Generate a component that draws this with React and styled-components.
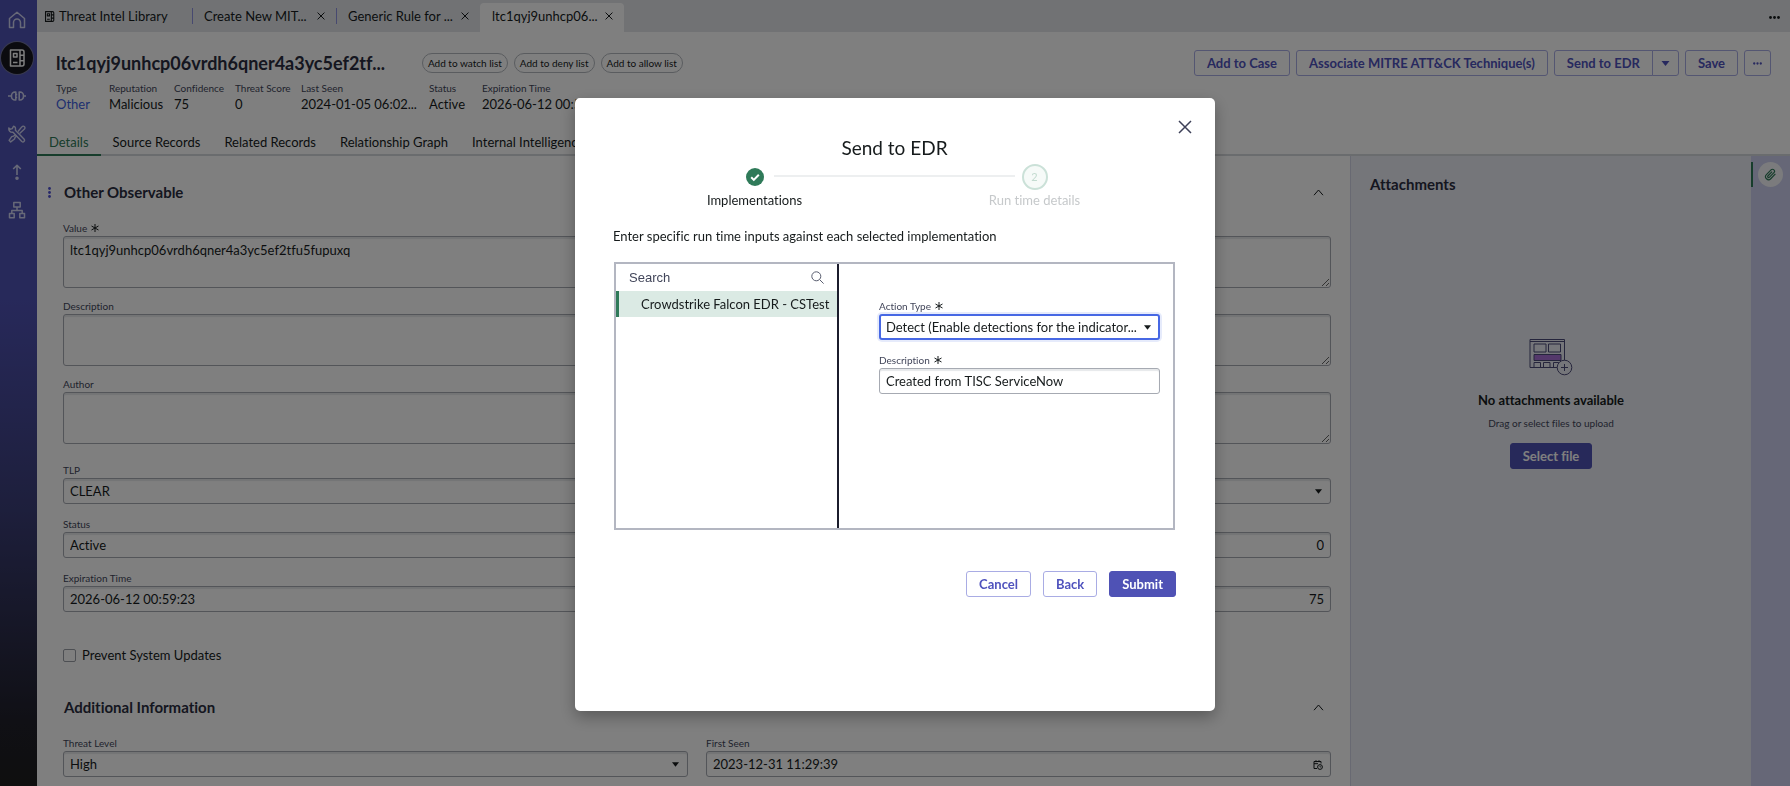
import React from "react";
import styled, { createGlobalStyle, css } from "styled-components";

const GlobalStyle = createGlobalStyle`
  * {
    box-sizing: border-box;
  }

  body {
    margin: 0;
    font-family: Lato, "Liberation Sans", sans-serif;
    font-size: 13px;
    line-height: 16px;
    font-variant-ligatures: no-common-ligatures;
    color: #161b1c;
    background: #fff;
    overflow: hidden;
  }

  h1, h2, h3, p, dl, dd {
    margin: 0;
  }

  button, input, select, textarea {
    font: inherit;
    font-variant-ligatures: inherit;
    color: inherit;
    margin: 0;
  }

  button {
    padding: 0;
    border: 0;
    background: none;
    cursor: pointer;
  }

  svg {
    display: block;
    flex: none;
  }
`;

const Page = styled.div`
  display: flex;
  height: 100vh;
`;

/* side navigation */

const Sidebar = styled.nav`
  flex: none;
  display: flex;
  flex-direction: column;
  align-items: center;
  gap: 6px;
  width: 37px;
  padding: 4px 3px 0 0;
  background: linear-gradient(180deg, #4f52b5 0%, #4f52b5 38%, #3b3e78 65%, #20202a 92%, #1e1e1e 100%);
`;

const NavButton = styled.button`
  display: flex;
  align-items: center;
  justify-content: center;
  width: 32px;
  height: 32px;
  border-radius: 50%;
  color: #cfd2f0;

  ${(p) =>
    p.$active &&
    css`
      background: #17171f;
      color: #fff;
      box-shadow: 0 0 0 1px #70739c;
    `}
`;

const Workspace = styled.div`
  flex: 1;
  min-width: 0;
  display: flex;
  flex-direction: column;
`;

/* open record tabs */

const TabBar = styled.div`
  flex: none;
  display: flex;
  align-items: flex-end;
  height: 32px;
  background: #e2e5e9;
`;

const RecordTab = styled.div`
  display: flex;
  align-items: center;
  gap: 4px;
  width: ${(p) => p.$width || 144}px;
  height: 29px;
  padding: 0 11px 3px ${(p) => (p.$home ? 7 : 12)}px;
  border-radius: 4px 4px 0 0;
  background: ${(p) => (p.$active ? "#fff" : "transparent")};
  white-space: nowrap;
`;

const TabName = styled.span`
  flex: 1;
`;

const TabDivider = styled.span`
  align-self: center;
  width: 1px;
  height: 16px;
  margin-right: -1px;
  background: #8f92e0;
`;

const TabMenu = styled.button`
  margin: 0 10px 13px auto;
`;

/* record header */

const Header = styled.header`
  flex: none;
  height: 124px;
  display: flex;
  flex-direction: column;
  border-bottom: 2px solid #d5d8dc;
`;

const HeaderTop = styled.div`
  display: flex;
  align-items: center;
  justify-content: space-between;
  padding: 18px 19px 0;
`;

const TitleGroup = styled.div`
  display: flex;
  align-items: center;
  gap: 37px;
`;

const Title = styled.h1`
  font-size: 18px;
  line-height: 26px;
  font-weight: 700;
  color: #2a2d40;
`;

const Row = styled.div`
  display: flex;
  align-items: center;
  gap: 6px;
`;

const Chip = styled.button`
  height: 20px;
  padding: 0 5px;
  border: 1px solid #b4b8be;
  border-radius: 10px;
  font-size: 10px;
  line-height: 18px;
`;

const Button = styled.button`
  display: flex;
  align-items: center;
  justify-content: center;
  height: 26px;
  padding: 0 ${(p) => p.$pad || 12}px;
  border: 1px solid #a9ace4;
  border-radius: 3px;
  background: #fff;
  color: #4f52bd;
  font-weight: 700;
  white-space: nowrap;

  ${(p) =>
    p.$primary &&
    css`
      border-color: #4f52b5;
      background: #4f52b5;
      color: #fff;
    `}
`;

const SplitButton = styled.div`
  display: flex;

  ${Button}:first-child {
    border-radius: 3px 0 0 3px;
  }

  ${Button}:last-child {
    margin-left: -1px;
    border-radius: 0 3px 3px 0;
  }
`;

const Facts = styled.dl`
  display: grid;
  grid-template-columns: 53px 65px 61px 66px 128px 53px 130px;
  padding: 4px 19px 0;
  white-space: nowrap;
`;

const FactName = styled.dt`
  font-size: 10px;
  line-height: 16px;
  color: #42465a;
`;

const FactLink = styled.a`
  color: #3d5fe0;
  text-decoration: none;
`;

const SectionTabs = styled.div`
  display: flex;
  margin-top: auto;
  margin-bottom: -2px;
`;

const SectionTab = styled.button`
  padding: 0 12px 4px;
  line-height: 16px;
  white-space: nowrap;
  border-bottom: 2px solid ${(p) => (p.$active ? "#2f7a59" : "transparent")};
  color: ${(p) => (p.$active ? "#2f7a59" : "inherit")};
`;

/* record body */

const Body = styled.div`
  flex: 1;
  min-height: 0;
  display: flex;
`;

const Form = styled.main`
  flex: 1;
  min-width: 0;
  padding: 24px 19px 0 26px;
  overflow: hidden;
`;

const SectionHead = styled.div`
  display: flex;
  align-items: center;
  justify-content: space-between;
  height: 24px;
  margin-top: ${(p) => p.$top || 0}px;
  padding: 0 7px 0 1px;
`;

const SectionTitle = styled.h2`
  position: relative;
  font-size: 15px;
  line-height: 24px;
  font-weight: 700;
  color: #2a2d40;
`;

const Grip = styled.span`
  position: absolute;
  left: -16px;
  top: 7px;
  color: #4f52d5;
`;

const Field = styled.div`
  display: flex;
  flex-direction: column;
  min-width: 0;
  margin-top: ${(p) => p.$top || 0}px;
`;

const Label = styled.label`
  display: flex;
  align-items: center;
  gap: 4px;
  height: 16px;
  font-size: 10px;
  line-height: 16px;
  color: #42465a;
`;

const boxStyle = css`
  width: 100%;
  border: 1px solid #a6aab2;
  border-radius: 3px;
  background: #fff;
  box-shadow: inset 0 2px 1px #e6e8ea;
  outline: none;
`;

const TextArea = styled.textarea`
  ${boxStyle}
  display: block;
  height: 52px;
  padding: 5px 6px;
  resize: vertical;
`;

const Input = styled.input`
  ${boxStyle}
  height: 26px;
  padding: 0 6px;
  text-align: ${(p) => (p.$right ? "right" : "left")};
`;

const SelectWrap = styled.div`
  position: relative;

  svg {
    position: absolute;
    right: 9px;
    top: 11px;
    pointer-events: none;
  }
`;

const Select = styled.select`
  ${boxStyle}
  display: block;
  height: 26px;
  padding: 0 17px 0 6px;
  appearance: none;
  text-overflow: ellipsis;

  ${(p) =>
    p.$focus &&
    css`
      border: 2px solid #4768e4;
      padding-left: 5px;
      box-shadow: 0 0 0 2px #e6ebfb;
    `}
`;

const InputWrap = styled.div`
  position: relative;

  svg {
    position: absolute;
    right: 8px;
    top: 9px;
  }
`;

const Columns = styled.div`
  display: grid;
  grid-template-columns: 1fr 1fr;
  gap: 12px 18px;
  margin-top: ${(p) => p.$top}px;
`;

const CheckRow = styled.label`
  display: flex;
  align-items: center;
  gap: 6px;
  margin-top: 35px;
`;

const Checkbox = styled.input`
  appearance: none;
  width: 13px;
  height: 13px;
  border: 1px solid #9a9ea6;
  border-radius: 2px;
  background: #fff;
`;

/* attachments */

const Attachments = styled.aside`
  flex: none;
  display: flex;
  flex-direction: column;
  width: 401px;
  padding: 16px 19px;
  border-left: 1px solid #d0d3e4;
  background: #ebedf4;
`;

const Empty = styled.div`
  display: flex;
  flex-direction: column;
  align-items: center;
  margin-top: 142px;
`;

const EmptyTitle = styled.h3`
  margin-top: 16px;
  font-size: 13px;
  line-height: 16px;
  font-weight: 700;
`;

const EmptyHint = styled.p`
  margin: 8px 0 13px;
  font-size: 10px;
  line-height: 14px;
  color: #42465a;
`;

const Rail = styled.div`
  flex: none;
  display: flex;
  align-items: flex-start;
  gap: 5px;
  width: 39px;
  padding-top: 6px;
  background: #cccfee;
`;

const RailMarker = styled.span`
  width: 2px;
  height: 25px;
  background: #2f7a59;
`;

const RailButton = styled.button`
  display: flex;
  align-items: center;
  justify-content: center;
  width: 25px;
  height: 25px;
  border-radius: 50%;
  background: #f6f7fa;
  color: #2f7a59;
`;

/* modal */

const Overlay = styled.div`
  position: fixed;
  inset: 0;
  display: flex;
  align-items: flex-start;
  justify-content: center;
  padding-top: 98px;
  background: rgba(0, 0, 0, 0.5);
`;

const Dialog = styled.section`
  display: flex;
  flex-direction: column;
  width: 640px;
  padding: 22px 39px 114px 38px;
  border-radius: 5px;
  background: #fff;
  box-shadow: 0 6px 16px rgba(0, 0, 0, 0.3);
`;

const CloseButton = styled.button`
  align-self: flex-end;
  height: 14px;
  margin-right: -16px;
  color: #3d4058;
`;

const DialogTitle = styled.h2`
  font-size: 19px;
  line-height: 28px;
  font-weight: 400;
  text-align: center;
`;

const Steps = styled.ol`
  display: grid;
  grid-template-columns: 280px 280px;
  justify-content: center;
  margin: 2px 0 0;
  padding: 0;
  list-style: none;
`;

const Step = styled.li`
  position: relative;
  display: flex;
  flex-direction: column;
  align-items: center;
  color: ${(p) => (p.$upcoming ? "#c6c9cb" : "inherit")};
  line-height: 20px;

  /* line from this step to the next one */
  &:not(:last-child)::after {
    content: "";
    position: absolute;
    top: 11px;
    left: calc(50% + 19px);
    width: calc(100% - 39px);
    height: 2px;
    background: #edeff0;
  }
`;

const StepMark = styled.span`
  display: flex;
  align-items: center;
  height: 26px;
`;

const StepNumber = styled.span`
  width: 26px;
  height: 26px;
  border: 2px solid #cbe1d8;
  border-radius: 50%;
  background: #f6faf8;
  color: #c3dbd0;
  font-size: 11px;
  line-height: 22px;
  text-align: center;
`;

const Intro = styled.p`
  margin-top: 16px;
  line-height: 20px;
`;

const Split = styled.div`
  display: grid;
  grid-template-columns: 223px 1fr;
  height: 268px;
  margin: 16px 1px 0;
  border: 2px solid #b3b6c1;
`;

const ListPane = styled.div`
  border-right: 2px solid #1b1c2c;
`;

const SearchBox = styled.label`
  display: flex;
  align-items: center;
  justify-content: space-between;
  height: 27px;
  padding: 0 13px;
  color: #5a5e70;
`;

const SearchInput = styled.input`
  flex: 1;
  min-width: 0;
  padding: 0;
  border: 0;
  outline: 0;
  background: none;
  font-family: "Liberation Sans", Arial, sans-serif;

  &::placeholder {
    color: #42465a;
    opacity: 1;
  }
`;

const ListItem = styled.button`
  display: block;
  width: 100%;
  height: 26px;
  padding-left: 22px;
  border-left: 3px solid #2f7a59;
  background: #dbeae4;
  text-align: left;
  white-space: nowrap;
`;

const InputPane = styled.div`
  min-width: 0;
  padding: 34px 13px 0 40px;
`;

const Actions = styled.div`
  display: flex;
  justify-content: flex-end;
  gap: 12px;
  margin-top: 41px;
`;

/* icons */

function Icon({ size = 18, children, width = 1.5 }) {
  return (
    <svg
      width={size}
      height={size}
      viewBox="0 0 18 18"
      fill="none"
      stroke="currentColor"
      strokeWidth={width}
      strokeLinejoin="round"
      aria-hidden="true"
    >
      {children}
    </svg>
  );
}

const HomeIcon = () => (
  <Icon>
    <path d="M1.5 7.500 9 1.200l7.500 6.300v9h-4v-5a3.500 3.500 0 0 0-7 0v5h-4z" />
  </Icon>
);

const LibraryIcon = ({ size, width }) => (
  <Icon size={size} width={width}>
    <path d="M2.500 1h11.500a2 2 0 0 1 2 2v12a2 2 0 0 1-2 2H2.500zM12 1v16M12 6.300h4M12 11.700h4M5.500 4.500h3.500v3.500H5.500zM5 13.500h4.500" />
  </Icon>
);

const PlugIcon = () => (
  <Icon width={1.6}>
    <path d="M0 9h3.500M7.800 5v8H7a3.500 3.500 0 0 1-3.500-3.500v-1A3.500 3.500 0 0 1 7 5zM11.200 5v8h.8a3.500 3.500 0 0 0 3.500-3.500v-1A3.500 3.500 0 0 0 12 5zM15.500 9H18M7.800 7.500h1.400M7.800 10.500h1.400" />
  </Icon>
);

const ToolsIcon = () => (
  <Icon width={1.4}>
    <path d="M5.500 1.200 4.300 3.600 2 4.200.9 2.900C.3 5.500 2.300 7.600 5 7.200l8.800 9.300c1.600 1.200 3.500-.6 2.400-2.200L7.400 5.200C7.900 3 7 1.300 5.500 1.200z" />
    <path d="m10 6.500 3.800-4.600c1-1 2-.9 2.700-.2.700.7.600 1.800-.3 2.600L11.600 8.400M7.500 9.500l-2 1.700-1.800.5-2.600 3.600 1.600 1.600L6.500 14l.5-1.500 1.800-1.800" />
  </Icon>
);

const ArrowIcon = () => (
  <Icon width={1.6}>
    <path d="M9 12V2.500M5.200 6 9 2.300 12.800 6" />
    <circle cx="9" cy="15.300" r="1" fill="currentColor" />
  </Icon>
);

const NetworkIcon = () => (
  <Icon>
    <path d="M5.800 1.500h6.400v4.500H5.800zM1.500 12.500h4.700v4.200H1.500zM11.800 12.500h4.700v4.200h-4.700zM9 6v3.500M3.800 12.500v-3h10.400v3" />
  </Icon>
);

const CloseIcon = ({ size = 8, width = 1 }) => (
  <svg width={size} height={size} viewBox="0 0 14 14" stroke="currentColor" aria-hidden="true">
    <path d="M1 1l12 12M13 1 1 13" strokeWidth={(width * 14) / size} />
  </svg>
);

const DotsIcon = ({ size = 11, up }) => (
  <svg width={up ? 3 : size} height={up ? 11 : 3} viewBox={up ? "0 0 3 11" : "0 0 11 3"} fill="currentColor" aria-hidden="true">
    {[1.5, 5.5, 9.5].map((n) => (
      <circle key={n} cx={up ? 1.5 : n} cy={up ? n : 1.5} r="1.4" />
    ))}
  </svg>
);

const Caret = ({ size = 7 }) => (
  <svg width={size} height="5" viewBox="0 0 8 5" fill="currentColor" aria-hidden="true">
    <path d="M0 0h8L4 5z" />
  </svg>
);

const ChevronIcon = () => (
  <svg width="11" height="7" viewBox="0 0 11 7" fill="none" stroke="currentColor" aria-hidden="true">
    <path d="M1 6.200 5.500 1 10 6.200" />
  </svg>
);

const StarIcon = () => (
  <svg width="8" height="8" viewBox="0 0 8 8" stroke="#161b1c" aria-hidden="true">
    <path d="M4 0v8M.5 2l7 4M7.500 2l-7 4" />
  </svg>
);

const CalendarIcon = () => (
  <svg width="10" height="10" viewBox="0 0 10 10" fill="none" stroke="currentColor" aria-hidden="true">
    <path d="M4 8.500H1v-7h7v2M1 3.700h4M3 .2v2M6 .2v2" />
    <circle cx="7" cy="7" r="2.400" />
    <path d="M7 5.700V7h1.200" strokeWidth=".7" />
  </svg>
);

const SearchIcon = () => (
  <svg width="13" height="13" viewBox="0 0 13 13" fill="none" stroke="currentColor" aria-hidden="true">
    <circle cx="5.300" cy="5.300" r="4.500" />
    <path d="m8.600 8.600 4 4" />
  </svg>
);

const CheckIcon = () => (
  <svg width="18" height="18" viewBox="0 0 18 18" fill="none" aria-hidden="true">
    <circle cx="9" cy="9" r="9" fill="#2f7a59" />
    <path d="m5.200 9.300 2.600 2.600 5-5.200" stroke="#fff" strokeWidth="2" />
  </svg>
);

const ClipIcon = () => (
  <svg width="13" height="13" viewBox="0 0 24 24" fill="none" stroke="currentColor" strokeWidth="2.200" aria-hidden="true">
    <path d="m21 11-8.600 8.800a5.500 5.500 0 0 1-7.900-7.700L13 3.400a3.700 3.700 0 0 1 5.300 5.200l-8.500 8.700a1.900 1.900 0 0 1-2.700-2.600L15 6.700" />
  </svg>
);

const EmptyPicture = () => (
  <svg width="44" height="38" viewBox="0 0 44 38" fill="none" stroke="#4b4a78" aria-hidden="true">
    <path d="M1 1.500h34.500v28H1zM1 3.500h34.500" />
    <path d="M5 6h12v8H5zM19.500 6h12v8h-12z" />
    <path d="M5 16.500h27v6H5z" fill="#a871d6" />
    <path d="M5 29v-4.500h6.500V29M14.500 29v-4.500H21V29M24.500 29v-4.500H30" />
    <circle cx="35.500" cy="29.500" r="7.300" fill="#ebedf4" />
    <path d="M35.500 26v7M32 29.500h7" />
  </svg>
);

const navItems = [
  { name: "Home", icon: <HomeIcon /> },
  { name: "Threat Intel Library", icon: <LibraryIcon />, active: true },
  { name: "Integrations", icon: <PlugIcon /> },
  { name: "Tools", icon: <ToolsIcon /> },
  { name: "Escalations", icon: <ArrowIcon /> },
  { name: "Network", icon: <NetworkIcon /> },
];

const facts = [
  ["Type", <FactLink href="#type">Other</FactLink>],
  ["Reputation", "Malicious"],
  ["Confidence", "75"],
  ["Threat Score", "0"],
  ["Last Seen", "2024-01-05 06:02..."],
  ["Status", "Active"],
  ["Expiration Time", "2026-06-12 00:59:23"],
];

const sectionTabs = [
  "Details",
  "Source Records",
  "Related Records",
  "Relationship Graph",
  "Internal Intelligence",
];

function SelectField({ id, label, value, top, required, focus }) {
  return (
    <Field $top={top}>
      <Label htmlFor={id}>
        {label}
        {required && <StarIcon />}
      </Label>
      <SelectWrap>
        <Select id={id} $focus={focus} defaultValue={value}>
          <option>{value}</option>
        </Select>
        <Caret />
      </SelectWrap>
    </Field>
  );
}

function InputField({ id, label, value, top, required, right }) {
  return (
    <Field $top={top}>
      <Label htmlFor={id}>
        {label}
        {required && <StarIcon />}
      </Label>
      <Input id={id} defaultValue={value} $right={right} />
    </Field>
  );
}

function AreaField({ id, label, value, top, required }) {
  return (
    <Field $top={top}>
      <Label htmlFor={id}>
        {label}
        {required && <StarIcon />}
      </Label>
      <TextArea id={id} defaultValue={value} />
    </Field>
  );
}

function RecordHeader() {
  return (
    <Header>
      <HeaderTop>
        <TitleGroup>
          <Title>ltc1qyj9unhcp06vrdh6qner4a3yc5ef2tf...</Title>
          <Row>
            <Chip>Add to watch list</Chip>
            <Chip>Add to deny list</Chip>
            <Chip>Add to allow list</Chip>
          </Row>
        </TitleGroup>
        <Row>
          <Button>Add to Case</Button>
          <Button>Associate MITRE ATT&amp;CK Technique(s)</Button>
          <SplitButton>
            <Button>Send to EDR</Button>
            <Button $pad={8} aria-label="More send options">
              <Caret size={9} />
            </Button>
          </SplitButton>
          <Button>Save</Button>
          <Button $pad={8} aria-label="More actions">
            <DotsIcon size={9} />
          </Button>
        </Row>
      </HeaderTop>
      <Facts>
        {facts.map(([name, value]) => (
          <div key={name}>
            <FactName>{name}</FactName>
            <dd>{value}</dd>
          </div>
        ))}
      </Facts>
      <SectionTabs>
        {sectionTabs.map((name, i) => (
          <SectionTab key={name} $active={i === 0}>
            {name}
          </SectionTab>
        ))}
      </SectionTabs>
    </Header>
  );
}

function ObservableForm() {
  return (
    <Form>
      <SectionHead>
        <SectionTitle>
          <Grip>
            <DotsIcon up />
          </Grip>
          Other Observable
        </SectionTitle>
        <button aria-label="Collapse Other Observable">
          <ChevronIcon />
        </button>
      </SectionHead>
      <AreaField id="value" label="Value" required top={16} value="ltc1qyj9unhcp06vrdh6qner4a3yc5ef2tfu5fupuxq" />
      <AreaField id="description" label="Description" top={10} />
      <AreaField id="author" label="Author" top={10} />
      <SelectField id="tlp" label="TLP" value="CLEAR" top={18} />
      <Columns $top={12}>
        <InputField id="status" label="Status" value="Active" />
        <InputField id="score" label="Threat Score" value="0" right />
        <InputField id="expiration" label="Expiration Time" value="2026-06-12 00:59:23" />
        <InputField id="confidence" label="Confidence" value="75" right />
      </Columns>
      <CheckRow>
        <Checkbox type="checkbox" />
        Prevent System Updates
      </CheckRow>
      <SectionHead $top={32}>
        <SectionTitle>Additional Information</SectionTitle>
        <button aria-label="Collapse Additional Information">
          <ChevronIcon />
        </button>
      </SectionHead>
      <Columns $top={16}>
        <SelectField id="level" label="Threat Level" value="High" />
        <Field>
          <Label htmlFor="first-seen">First Seen</Label>
          <InputWrap>
            <Input id="first-seen" defaultValue="2023-12-31 11:29:39" />
            <CalendarIcon />
          </InputWrap>
        </Field>
      </Columns>
    </Form>
  );
}

function SendToEdr() {
  return (
    <Overlay>
      <Dialog role="dialog" aria-modal="true" aria-labelledby="dialog-title">
        <CloseButton aria-label="Close">
          <CloseIcon size={14} width={1.5} />
        </CloseButton>
        <DialogTitle id="dialog-title">Send to EDR</DialogTitle>
        <Steps>
          <Step>
            <StepMark>
              <CheckIcon />
            </StepMark>
            Implementations
          </Step>
          <Step $upcoming>
            <StepNumber>2</StepNumber>
            Run time details
          </Step>
        </Steps>
        <Intro>Enter specific run time inputs against each selected implementation</Intro>
        <Split>
          <ListPane>
            <SearchBox>
              <SearchInput placeholder="Search" aria-label="Search" />
              <SearchIcon />
            </SearchBox>
            <ListItem>Crowdstrike Falcon EDR - CSTest</ListItem>
          </ListPane>
          <InputPane>
            <SelectField id="action-type" label="Action Type" required focus value="Detect (Enable detections for the indicator..." />
            <InputField id="action-description" label="Description" required top={12} value="Created from TISC ServiceNow" />
          </InputPane>
        </Split>
        <Actions>
          <Button>Cancel</Button>
          <Button>Back</Button>
          <Button $primary>Submit</Button>
        </Actions>
      </Dialog>
    </Overlay>
  );
}

function App() {
  return (
    <>
      <GlobalStyle />
      <Page>
        <Sidebar>
          {navItems.map((item) => (
            <NavButton key={item.name} aria-label={item.name} $active={item.active}>
              {item.icon}
            </NavButton>
          ))}
        </Sidebar>
        <Workspace>
          <TabBar>
            <RecordTab $home $width={155}>
              <LibraryIcon size={11} width={1.8} />
              <TabName>Threat Intel Library</TabName>
            </RecordTab>
            <TabDivider />
            <RecordTab>
              <TabName>Create New MIT...</TabName>
              <button aria-label="Close tab">
                <CloseIcon />
              </button>
            </RecordTab>
            <TabDivider />
            <RecordTab>
              <TabName>Generic Rule for ...</TabName>
              <button aria-label="Close tab">
                <CloseIcon />
              </button>
            </RecordTab>
            <RecordTab $active>
              <TabName>ltc1qyj9unhcp06...</TabName>
              <button aria-label="Close tab">
                <CloseIcon />
              </button>
            </RecordTab>
            <TabMenu aria-label="More tabs">
              <DotsIcon />
            </TabMenu>
          </TabBar>
          <RecordHeader />
          <Body>
            <ObservableForm />
            <Attachments>
              <SectionTitle>Attachments</SectionTitle>
              <Empty>
                <EmptyPicture />
                <EmptyTitle>No attachments available</EmptyTitle>
                <EmptyHint>Drag or select files to upload</EmptyHint>
                <Button $primary>Select file</Button>
              </Empty>
            </Attachments>
            <Rail>
              <RailMarker />
              <RailButton aria-label="Attachments">
                <ClipIcon />
              </RailButton>
            </Rail>
          </Body>
        </Workspace>
      </Page>
      <SendToEdr />
    </>
  );
}

export default App;
